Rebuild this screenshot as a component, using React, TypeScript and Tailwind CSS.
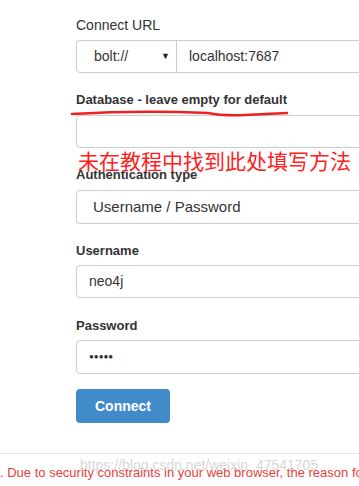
import React from "react";

const font = { fontFamily: '"Liberation Sans", Arial, sans-serif' };

function Label({ children, bold = true, className = "" }: { children: React.ReactNode; bold?: boolean; className?: string }) {
  return (
    <div className={`h-[18px] leading-[18px] text-[13px] text-[#333] ${bold ? "font-bold" : ""} ${className}`}>
      {children}
    </div>
  );
}

export default function App() {
  return (
    <div className="relative h-[486px] w-[359px] overflow-hidden bg-white" style={font}>
      <div className="pl-[76px] pt-[16px] w-[400px]">
        {/* Connect URL */}
        <Label bold={false} className="text-[14px]">Connect URL</Label>
        <div className="mt-[6px] flex h-[33px] rounded-[4px] border border-[#ccc]">
          <div className="relative flex w-[100px] items-center border-r border-[#ccc] pl-[17px] text-[14px] text-[#333]">
            bolt://
            <span className="absolute right-[6px] top-[9px] text-[9px] text-[#222]">▼</span>
          </div>
          <div className="flex items-center pl-[12px] text-[14px] text-[#333]">localhost:7687</div>
        </div>

        {/* Database */}
        <Label className="mt-[18px]">Database - leave empty for default</Label>
        <div className="mt-[6px] h-[33px] rounded-[4px] border border-[#ccc]" />

        {/* Auth type */}
        <Label className="mt-[18px]">Authentication type</Label>
        <div className="mt-[6px] flex h-[34px] items-center rounded-[4px] border border-[#ccc] pl-[16px] text-[15px] text-[#333]">
          Username / Password
        </div>

        {/* Username */}
        <Label className="mt-[18px]">Username</Label>
        <div className="mt-[5px] flex h-[33px] items-center rounded-[4px] border border-[#ccc] pl-[12px] text-[14px] text-[#333]">
          neo4j
        </div>

        {/* Password */}
        <Label className="mt-[19px]">Password</Label>
        <div className="mt-[5px] flex h-[34px] items-center rounded-[4px] border border-[#ccc] pl-[12px] text-[8px] text-[#333]">
          ●●●●●
        </div>

        <button className="mt-[15px] h-[34px] w-[94px] rounded-[4px] bg-[#428bca] text-[14px] font-bold text-white">
          Connect
        </button>
      </div>

      <div className="mt-[30px] border-t border-[#e5e5e5]" />
      <div className="relative mt-[9px] whitespace-nowrap text-[13px] text-[#e8413b]">
        . Due to security constraints in your web browser, the reason for
        <span className="absolute left-[80px] top-[-8px] text-[14px] text-[#c8c8c8] opacity-70">
          https://blog.csdn.net/weixin_47541705
        </span>
      </div>

      {/* annotations */}
      <svg className="absolute left-0 top-0" width="359" height="130">
        <path
          d="M72 114 Q 140 110 208 113 Q 222 116 245 115 L 287 113"
          fill="none"
          stroke="#f02020"
          strokeWidth="2.5"
          strokeLinecap="round"
        />
      </svg>
      <div
        className="absolute left-[78px] top-[147px] whitespace-nowrap text-[21px] leading-[26px] text-[#ff2020]"
        style={{ fontFamily: '"Noto Sans CJK SC", sans-serif' }}
      >
        未在教程中找到此处填写方法
      </div>
    </div>
  );
}
